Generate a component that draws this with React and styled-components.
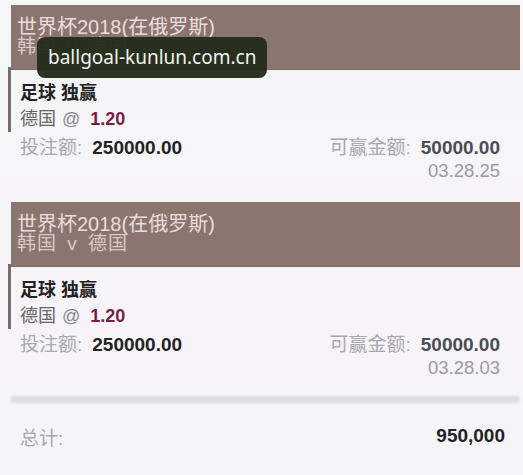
import React from 'react'
import styled, {createGlobalStyle} from 'styled-components'

const GlobalStyle = createGlobalStyle`
  html, body {
    margin: 0;
    padding: 0;
    background: #f5f4f9;
  }
  body {
    font-family: "Liberation Sans", "Noto Sans CJK SC", sans-serif;
  }
`

const Page = styled.div`
  position: relative;
  width: 523px;
  height: 475px;
  overflow: hidden;
  padding-top: 5px;
  box-sizing: border-box;
  background: linear-gradient(180deg, #f4f6f8 0%, #f7f4f8 50%, #f5f4f9 100%);
`

const Card = styled.div`
  margin: 0 3px 0 8px;
  margin-bottom: ${props => props.gap}px;
`

const Header = styled.div`
  margin-left: 3px;
  height: 65px;
  box-sizing: border-box;
  padding: 12px 6px 0;
  background: #8a766f;
  border-bottom: 1px solid #7a6a64;
  color: #eadcdc;
  font-size: 20px;
  line-height: 20px;
`

const Teams = styled.div`
  font-size: 19px;
  color: #dccaca;
  letter-spacing: 1px;
  word-spacing: 4px;
`

const Selection = styled.div`
  border-left: 3px solid #746d6c;
  margin-top: -3px;
  padding: 13px 0 0 9px;
`

const Line = styled.div`
  height: 26px;
  line-height: 26px;
  font-size: 18px;
`

const Market = styled(Line)`
  font-weight: bold;
  color: #222;
`

const Pick = styled.span`
  color: #666;
`

const At = styled.span`
  color: #888;
  margin: 0 10px 0 6px;
`

const Odds = styled.span`
  font-weight: bold;
  color: #7b1c48;
`

const Row = styled.div`
  display: flex;
  justify-content: space-between;
  align-items: center;
  padding: 0 20px 0 12px;
  height: 26px;
  font-size: 19px;
`

const Label = styled.span`
  color: #a8a8ae;
  margin-right: 10px;
`

const Amount = styled.span`
  font-weight: bold;
  color: ${props => props.color};
`

const Time = styled.div`
  text-align: right;
  padding-right: 20px;
  height: 25px;
  line-height: 25px;
  font-size: 18.5px;
  color: #9a9aa0;
`

const Divider = styled.div`
  margin: 0 3px 0 11px;
  height: 7px;
  border-radius: 3px;
  background: #dedde3;
  filter: blur(1px);
`

const Total = styled.div`
  display: flex;
  justify-content: space-between;
  align-items: center;
  padding: 0 18px 0 20px;
  margin-top: 18px;
  height: 30px;
  font-size: 19px;
`

const Watermark = styled.div`
  position: absolute;
  left: 37px;
  top: 37px;
  width: 230px;
  height: 41px;
  box-sizing: border-box;
  padding-left: 11px;
  border-radius: 8px;
  background: rgba(36, 44, 28, 0.96);
  color: #f2f2ee;
  font-family: "Noto Sans", "Open Sans", sans-serif;
  font-size: 19px;
  line-height: 41px;
  white-space: nowrap;
`

const bets = [
  {time: '03.28.25', gap: 19},
  {time: '03.28.03', gap: 16}
]

function Bet({time, gap}) {
  return (
    <Card gap={gap}>
      <Header>
        <div>世界杯2018(在俄罗斯)</div>
        <Teams>韩国 v 德国</Teams>
      </Header>
      <Selection>
        <Market>足球 独赢</Market>
        <Line>
          <Pick>德国</Pick>
          <At>@</At>
          <Odds>1.20</Odds>
        </Line>
      </Selection>
      <Row>
        <span>
          <Label>投注额:</Label>
          <Amount color='#222'>250000.00</Amount>
        </span>
        <span>
          <Label>可赢金额:</Label>
          <Amount color='#4c4c52'>50000.00</Amount>
        </span>
      </Row>
      <Time>{time}</Time>
    </Card>
  )
}

export default function App() {
  return (
    <Page>
      <GlobalStyle />
      {bets.map((bet, i) => (
        <Bet key={i} {...bet} />
      ))}
      <Divider />
      <Total>
        <Label>总计:</Label>
        <Amount color='#222'>950,000</Amount>
      </Total>
      <Watermark>ballgoal-kunlun.com.cn</Watermark>
    </Page>
  )
}
